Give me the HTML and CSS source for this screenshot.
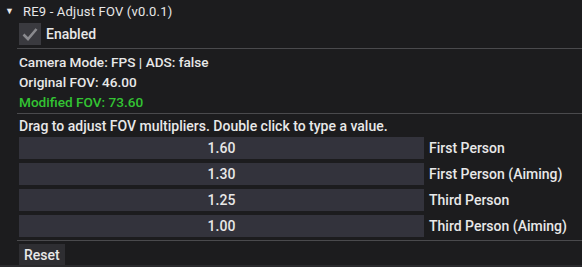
FILE: index.html
```html
<!DOCTYPE html>
<html lang="en">
<head>
    <meta charset="UTF-8">
    <title>RE9 - Adjust FOV</title>
    <link rel="stylesheet" href="styles.css">
</head>
<body>
    <div class="panel">
        <div class="header">
            <span class="arrow">&#9660;</span>
            <span class="title">RE9 - Adjust FOV (v0.0.1)</span>
        </div>
        <div class="content">
            <div class="check-row">
                <div class="checkbox">
                    <svg width="16" height="14" viewBox="0 0 16 14">
                        <path d="M1.5 7.5 L6 12 L14.5 2" fill="none" stroke="#8a8a8e" stroke-width="2.6"/>
                    </svg>
                </div>
                <span>Enabled</span>
            </div>
            <div class="sep"></div>
            <div class="info">
                <div class="line">Camera Mode: FPS | ADS: false</div>
                <div class="line">Original FOV: 46.00</div>
                <div class="line green">Modified FOV: 73.60</div>
            </div>
            <div class="sep"></div>
            <div class="line hint">Drag to adjust FOV multipliers. Double click to type a value.</div>
            <div class="sliders">
                <div class="slider-row"><div class="slider">1.60</div><span>First Person</span></div>
                <div class="slider-row"><div class="slider">1.30</div><span>First Person (Aiming)</span></div>
                <div class="slider-row"><div class="slider">1.25</div><span>Third Person</span></div>
                <div class="slider-row"><div class="slider">1.00</div><span>Third Person (Aiming)</span></div>
            </div>
            <div class="sep"></div>
            <div class="btn">Reset</div>
        </div>
    </div>
</body>
</html>
```

FILE: styles.css
```css
body {
    margin: 0;
    background-color: #1c1c1e;
    font-family: Roboto, 'Noto Sans', sans-serif;
    font-size: 14px;
    font-weight: 500;
    color: #e8e8e8;
    height: 267px;
    overflow: hidden;
}

.panel {
    height: 265px;
    border-bottom: 2px solid #2a2a2d;
    overflow: hidden;
}

.header {
    display: flex;
    align-items: center;
    height: 22px;
    padding-left: 5px;
    gap: 9px;
}

.arrow {
    font-size: 9px;
    color: #e8e8e8;
}

.title {
    font-size: 13px;
    font-weight: 400;
    letter-spacing: 0.2px;
}

.content {
    padding-left: 19px;
}

.check-row {
    display: flex;
    align-items: center;
    gap: 5px;
    height: 22px;
    margin-top: 1px;
}

.checkbox {
    width: 22px;
    height: 22px;
    background-color: #3a3a3f;
    display: flex;
    align-items: center;
    justify-content: center;
}

.sep {
    height: 1px;
    background-color: #4a4a4d;
    margin: 3px 0 3px -2px;
}

.info {
    margin-bottom: -2px;
    font-size: 13.6px;
}

.line {
    height: 20px;
    line-height: 20px;
    white-space: nowrap;
}

.hint {
    line-height: 18px;
}

.green {
    color: #33c433;
}

.sliders {
    display: flex;
    flex-direction: column;
    gap: 4px;
}

.slider-row {
    display: flex;
    align-items: center;
    gap: 5px;
}

.slider {
    width: 405px;
    height: 22px;
    line-height: 22px;
    text-align: center;
    background-color: #33333c;
}

.btn {
    display: inline-block;
    padding: 0 5px;
    height: 22px;
    line-height: 22px;
    background-color: #2e2e32;
}
```
